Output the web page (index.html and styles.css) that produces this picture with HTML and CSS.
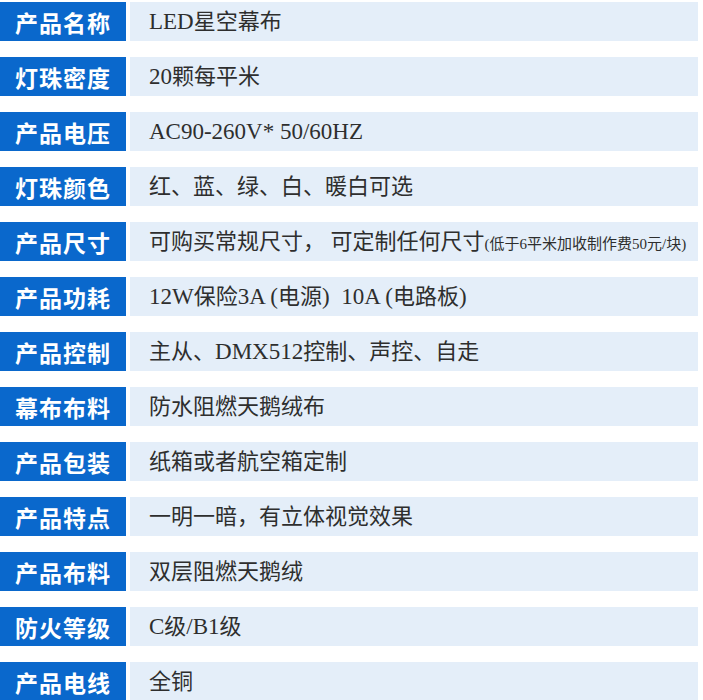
FILE: index.html
```html
<!DOCTYPE html>
<html lang="zh">
<head>
<meta charset="utf-8">
<link rel="stylesheet" href="styles.css">
</head>
<body>
<div class="table">
  <div class="row"><div class="label">产品名称</div><div class="value"><span class="en">LED</span>星空幕布</div></div>
  <div class="row"><div class="label">灯珠密度</div><div class="value"><span class="en">20</span>颗每平米</div></div>
  <div class="row"><div class="label">产品电压</div><div class="value"><span class="en">AC90-260V* 50/60HZ</span></div></div>
  <div class="row"><div class="label">灯珠颜色</div><div class="value">红、蓝、绿、白、暖白可选</div></div>
  <div class="row"><div class="label">产品尺寸</div><div class="value">可购买常规尺寸， 可定制任何尺寸<span class="small">(低于6平米加收制作费50元/块)</span></div></div>
  <div class="row"><div class="label">产品功耗</div><div class="value"><span class="en">12W</span>保险<span class="en">3A (</span>电源<span class="en">)&nbsp; 10A (</span>电路板<span class="en">)</span></div></div>
  <div class="row"><div class="label">产品控制</div><div class="value">主从、<span class="en">DMX512</span>控制、声控、自走</div></div>
  <div class="row"><div class="label">幕布布料</div><div class="value">防水阻燃天鹅绒布</div></div>
  <div class="row"><div class="label">产品包装</div><div class="value">纸箱或者航空箱定制</div></div>
  <div class="row"><div class="label">产品特点</div><div class="value">一明一暗，有立体视觉效果</div></div>
  <div class="row"><div class="label">产品布料</div><div class="value">双层阻燃天鹅绒</div></div>
  <div class="row"><div class="label">防火等级</div><div class="value"><span class="en">C</span>级<span class="en">/B1</span>级</div></div>
  <div class="row"><div class="label">产品电线</div><div class="value">全铜</div></div>
</div>
</body>
</html>
```

FILE: styles.css
```css
html, body {
  margin: 0;
  padding: 0;
  background: #ffffff;
}
body {
  width: 703px;
  height: 700px;
  overflow: hidden;
}
.table {
  display: flex;
  flex-direction: column;
  gap: 16px;
  padding-top: 2px;
  padding-right: 5px;
}
.row {
  display: flex;
  gap: 4px;
  height: 39px;
  flex-shrink: 0;
}
.label {
  width: 126px;
  flex-shrink: 0;
  background: #0a68cc;
  color: #ffffff;
  font-family: "Noto Sans CJK SC", sans-serif;
  font-weight: 700;
  font-size: 23px;
  letter-spacing: 1px;
  display: flex;
  align-items: center;
  justify-content: center;
}
.value {
  flex: 1;
  background: #e4eef9;
  color: #2e2e2e;
  font-family: "Liberation Serif", "Noto Sans CJK SC", serif;
  font-size: 22px;
  line-height: 39px;
  height: 39px;
  overflow: hidden;
  padding-left: 19px;
  white-space: nowrap;
}
.en {
  font-size: 23px;
}
.small {
  font-size: 15px;
}
```
